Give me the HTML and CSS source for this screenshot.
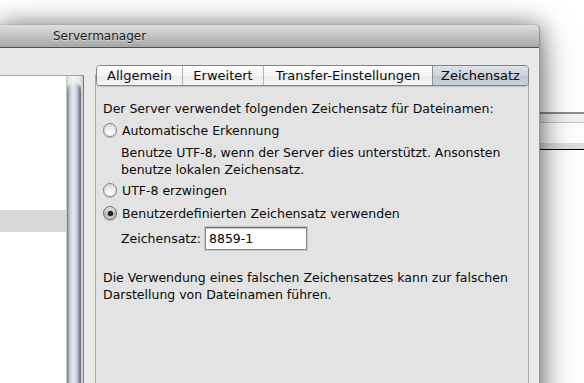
FILE: index.html
```html
<!DOCTYPE html>
<html lang="de">
<head>
<meta charset="utf-8">
<title>Servermanager</title>
<link rel="stylesheet" href="styles.css">
</head>
<body>
<div class="desktop">
  <div class="bgwin">
    <div class="bg-line1"></div>
    <div class="bg-gap"></div>
    <div class="bg-line2"></div>
    <div class="bg-area"></div>
    <div class="bg-band"></div>
    <div class="bg-line3"></div>
  </div>
  <div class="window">
    <div class="titlebar"><span class="title">Servermanager</span></div>
    <div class="content">
      <div class="sitelist">
        <div class="list"><div class="row selected"></div></div>
        <div class="scrollbar"><div class="thumb"></div></div>
      </div>
      <div class="tabview">
        <div class="tabs">
          <div class="tab t-allg">Allgemein</div>
          <div class="tab t-erw">Erweitert</div>
          <div class="tab t-trans">Transfer-Einstellungen</div>
          <div class="tab t-zeich active">Zeichensatz</div>
        </div>
        <div class="pane">
          <p class="intro">Der Server verwendet folgenden Zeichensatz für Dateinamen:</p>
          <div class="radio-row r-auto"><span class="radio"></span><span>Automatische Erkennung</span></div>
          <p class="desc">Benutze UTF-8, wenn der Server dies unterstützt. Ansonsten<br>benutze lokalen Zeichensatz.</p>
          <div class="radio-row r-utf"><span class="radio"></span><span>UTF-8 erzwingen</span></div>
          <div class="radio-row r-custom"><span class="radio checked"></span><span>Benutzerdefinierten Zeichensatz verwenden</span></div>
          <div class="field-row"><span class="field-label">Zeichensatz:</span><span class="input">8859-1</span></div>
          <p class="warning">Die Verwendung eines falschen Zeichensatzes kann zur falschen<br>Darstellung von Dateinamen führen.</p>
        </div>
      </div>
    </div>
  </div>
</div>
</body>
</html>
```
FILE: styles.css
```css
* { box-sizing: border-box; }
html, body { margin: 0; padding: 0; background: #fff; }
body {
  font-family: "DejaVu Sans", "Noto Sans", sans-serif;
  font-size: 12px;
  color: #0a0a0a;
}
.desktop {
  position: relative;
  width: 584px;
  height: 383px;
  overflow: hidden;
  background: #fff;
}

/* background window peeking out on the right */
.bgwin {
  position: absolute;
  left: 520px;
  top: 112px;
  right: 0;
  bottom: 0;
  background: #fff;
  display: flex;
  flex-direction: column;
}
.bg-line1 { height: 2px; background: #8c8c8c; }
.bg-gap { height: 8px; background: #f2f2f2; }
.bg-line2 { height: 1px; background: #c4c4c4; }
.bg-area { height: 20px; background: #fff; }
.bg-band { height: 6px; background: #dedede; }
.bg-line3 { height: 1px; background: #000; }

/* main window */
.window {
  position: absolute;
  left: 0;
  top: 25px;
  width: 540px;
  height: 400px;
  background: #e9e9e9;
  border-right: 1px solid #9a9a9a;
  border-radius: 0 5px 0 0;
  box-shadow: 0 0 22px rgba(0,0,0,0.42), 0 10px 40px rgba(0,0,0,0.38), 0 0 1px rgba(0,0,0,0.5);
  display: flex;
  flex-direction: column;
}
.titlebar {
  height: 23px;
  border-bottom: 1px solid #505050;
  border-radius: 0 5px 0 0;
  background: linear-gradient(#dedede, #c8c8c8 40%, #a6a6a6);
  display: flex;
  align-items: center;
  padding-left: 53px;
  flex-shrink: 0;
}
.title {
  color: #1c1c1c;
  text-shadow: 0 1px 0 rgba(255,255,255,0.45);
  line-height: 22px;
}
.content {
  display: flex;
  align-items: flex-start;
  padding-top: 27px;
  flex: 1;
}

/* left site list */
.sitelist {
  width: 84px;
  height: 340px;
  display: flex;
  border-top: 1px solid #a4a4a4;
  border-right: 1px solid #7c7c7c;
  background: #fff;
  flex-shrink: 0;
}
.list {
  width: 66px;
  background: #fff;
  padding-top: 134px;
}
.row { height: 22px; }
.row.selected { background: #d8d8d8; }
.scrollbar {
  width: 17px;
  background: linear-gradient(90deg, #bdbdbd, #e4e4e4 2px, #f4f4f4 8px, #e6e6e6 14px, #c8c8c8);
  padding: 6px 2px 0 1px;
}
.thumb {
  height: 100%;
  border-radius: 7px 7px 0 0;
  background: linear-gradient(90deg, #4f5a6a 0, #8e99a9 1px, #c3cbd6 3px, #e9edf2 6px, #d2d8e1 9px, #96a1b0 12px, #4f5a6a 13px);
  box-shadow: inset 0 2px 2px rgba(255,255,255,0.5);
}

/* tab view */
.tabview {
  margin-left: 11px;
  width: 434px;
  height: 340px;
  background: #e3e3e3;
  border: 1px solid #a8a8a8;
  display: flex;
  flex-direction: column;
  flex-shrink: 0;
}
.tabs {
  display: flex;
  margin-top: -11px;
  width: 433px;
  height: 21px;
  border: 1px solid #838383;
  border-radius: 4px;
  overflow: hidden;
  box-shadow: 0 1px 1px rgba(0,0,0,0.15);
  font-size: 13px;
}
.tab {
  height: 19px;
  line-height: 19px;
  text-align: center;
  color: #0a0a0a;
  background: linear-gradient(#ffffff, #f6f6f6 50%, #ececec 50%, #f3f3f3);
  border-left: 1px solid #b2b2b2;
}
.tab:first-child { border-left: none; }
.t-allg { width: 85px; }
.t-erw { width: 81px; }
.t-trans { width: 169px; }
.t-zeich { width: 96px; }
.tab.active {
  background: linear-gradient(#dde2e9, #cdd3dc 50%, #c0c7d1 50%, #cbd1da);
  border-left-color: #8d8d8d;
}

.pane {
  padding: 15px 0 0 7px;
  display: flex;
  flex-direction: column;
  align-items: flex-start;
  font-size: 12.5px;
}
.pane p { margin: 0; }
.intro { line-height: 16px; }
.radio-row {
  height: 18px;
  display: flex;
  align-items: center;
  gap: 5px;
}
.r-auto { margin-top: 4px; }
.r-utf { margin-top: 3px; }
.r-custom { margin-top: 5px; }
.radio {
  width: 14px;
  height: 14px;
  border-radius: 50%;
  border: 1px solid #858585;
  background: radial-gradient(circle at 50% 80%, #fff 0, #f0f0f0 40%, #cfcfcf 100%);
  box-shadow: 0 1px 1px rgba(0,0,0,0.2);
  display: flex;
  align-items: center;
  justify-content: center;
}
.radio.checked {
  background: linear-gradient(#e3e3e3, #c2c2c2 50%, #b2b2b2 50%, #cdcdcd);
  border-color: #6c6c6c;
}
.radio.checked::after {
  content: "";
  width: 5px;
  height: 5px;
  border-radius: 50%;
  background: #222;
  box-shadow: 0 0 1px #333;
}
.desc {
  margin-top: 5px !important;
  margin-left: 18px !important;
  line-height: 17px;
}
.field-row {
  margin-top: 5px;
  margin-left: 18px;
  height: 23px;
  display: flex;
  align-items: center;
  gap: 4px;
}
.input {
  width: 102px;
  height: 23px;
  background: #fff;
  border: 1px solid #8a8a8a;
  border-top-color: #6e6e6e;
  box-shadow: 0 0 0 1px #c6c6c6, inset 0 1px 1px rgba(0,0,0,0.25);
  padding-left: 3px;
  line-height: 21px;
  color: #000;
}
.warning {
  margin-top: 19px !important;
  line-height: 17px;
}
```
